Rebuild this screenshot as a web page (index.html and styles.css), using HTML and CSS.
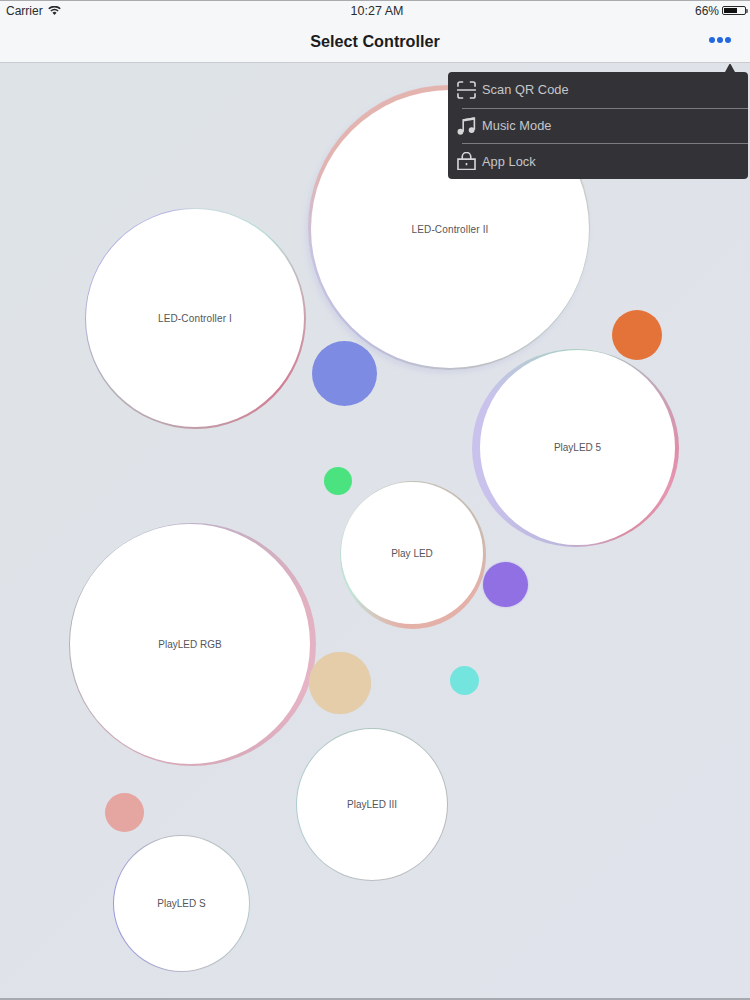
FILE: index.html
```html
<!DOCTYPE html>
<html lang="en">
<head>
<meta charset="utf-8">
<title>Select Controller</title>
<link rel="stylesheet" href="styles.css">
</head>
<body>
<div class="app">
  <header class="bars">
    <div class="status">
      <div class="status-left">
        <span>Carrier</span>
        <svg class="wifi" viewBox="0 0 14 10"><path d="M7 10 4.7 7.4a3.4 3.4 0 0 1 4.6 0zM3.6 6.2 2.4 4.9a7 7 0 0 1 9.200 0l-1.200 1.300a5.200 5.200 0 0 0-6.800 0zM1.300 3.700 0 2.400a10.400 10.400 0 0 1 14 0l-1.300 1.300a8.600 8.600 0 0 0-11.400 0z"/></svg>
      </div>
      <div class="status-time">10:27 AM</div>
      <div class="status-right">
        <span>66%</span>
        <span class="battery"><span class="battery-level"></span></span>
      </div>
    </div>
    <nav class="nav">
      <h1 class="nav-title">Select Controller</h1>
      <div class="nav-more"><i></i><i></i><i></i></div>
    </nav>
  </header>
  <main class="canvas">
    <div class="bubble ctrl-two"><span>LED-Controller II</span></div>
    <div class="bubble ctrl-one"><span>LED-Controller I</span></div>
    <div class="bubble play-five"><span>PlayLED 5</span></div>
    <div class="bubble play-led"><span>Play LED</span></div>
    <div class="bubble play-rgb"><span>PlayLED RGB</span></div>
    <div class="bubble play-three"><span>PlayLED III</span></div>
    <div class="bubble play-s"><span>PlayLED S</span></div>
    <div class="dot dot-blue"></div>
    <div class="dot dot-orange"></div>
    <div class="dot dot-green"></div>
    <div class="dot dot-purple"></div>
    <div class="dot dot-peach"></div>
    <div class="dot dot-cyan"></div>
    <div class="dot dot-salmon"></div>
    <div class="menu">
      <div class="menu-arrow"></div>
      <div class="menu-item">
        <svg class="menu-icon" viewBox="0 0 20 19"><path d="M1 6V3a2 2 0 0 1 2-2h3.500M13.500 1H17a2 2 0 0 1 2 2v3M1 13v3a2 2 0 0 0 2 2h3.500M13.500 18H17a2 2 0 0 0 2-2v-3M0 9.500h20"/></svg>
        <span>Scan QR Code</span>
      </div>
      <div class="menu-item">
        <svg class="menu-icon" viewBox="0 0 20 19"><path d="M6.500 15.500V3.200L18.300 1.200v12.300"/><path class="beam" d="M6.500 3.600 18.300 1.600"/><circle class="solid" cx="3.600" cy="15.600" r="3.100"/><circle class="solid" cx="15.400" cy="13.800" r="3.100"/></svg>
        <span>Music Mode</span>
      </div>
      <div class="menu-item">
        <svg class="menu-icon" viewBox="0 0 20 19"><path d="M5.500 7V5a4.500 4.500 0 0 1 9 0v2M1 7.500h18V18.500H1zM10 11.500v2.500"/></svg>
        <span>App Lock</span>
      </div>
    </div>
  </main>
</div>
</body>
</html>
```
FILE: styles.css
```css
* { box-sizing: border-box; }
html, body { margin: 0; padding: 0; }
body { width: 750px; height: 1000px; overflow: hidden; font-family: "Liberation Sans", Arial, sans-serif; }

.app { width: 750px; height: 1000px; display: flex; flex-direction: column; border-top: 1px solid #a9abae; border-bottom: 2px solid #a7a9b0; background: linear-gradient(135deg, #dee3e7, #e0e3eb); }

.bars { height: 62px; flex: none; background: #f5f7f8; border-bottom: 1px solid #c9cbce; display: flex; flex-direction: column; }
.status { height: 19px; padding: 0 4px 0 6px; display: grid; grid-template-columns: 1fr auto 1fr; align-items: center; font-size: 12px; color: #2b2b2d; }
.status-left { display: flex; align-items: center; gap: 5px; }
.wifi { width: 13px; height: 9px; fill: #2b2b2d; }
.status-time { font-size: 12.500px; padding-left: 2px; }
.status-right { display: flex; align-items: center; justify-content: flex-end; gap: 3px; }
.battery { width: 24px; height: 9px; padding: 1px; border: 1px solid #2b2b2d; border-radius: 2px; display: block; position: relative; }
.battery::after { content: ""; position: absolute; right: -3px; top: 1.500px; width: 2px; height: 4px; background: #6e6e70; border-radius: 0 1px 1px 0; }
.battery-level { display: block; width: 66%; height: 100%; background: #111; }

.nav { flex: 1; position: relative; display: flex; align-items: center; justify-content: center; padding-top: 1px; }
.nav-title { margin: 0; font-size: 16.200px; font-weight: 700; color: #1c1c1e; }
.nav-more { position: absolute; right: 19px; top: 17px; display: flex; gap: 2px; }
.nav-more i { display: block; width: 6px; height: 6px; border-radius: 50%; background: #2468e0; }

.canvas { flex: 1; margin-top: 1px; position: relative; overflow: hidden; z-index: 0; }

.bubble { position: absolute; border-radius: 50%; background: #fff; display: flex; align-items: center; justify-content: center; font-size: 10px; color: #55555a; }
.bubble::before { content: ""; position: absolute; z-index: -1; border-radius: 50%; inset: var(--halo); background: var(--ring); filter: blur(0.7px); opacity: 0.85; }
.ctrl-one, .ctrl-two { letter-spacing: 0.15px; }

.ctrl-one { left: 86px; top: 145px; width: 218px; height: 218px; --halo: -1.500px; --ring: conic-gradient(#c9d8dc 0deg, #b4dcd5 40deg, #c89aa5 85deg, #d26c86 130deg, #c08a98 170deg, #aeaab0 230deg, #a9a4e0 290deg, #a9a4e0 345deg, #c9d8dc 360deg); }
.ctrl-two { left: 311px; top: 26px; width: 278px; height: 278px; --halo: -5px -1px -2px -3px; --ring: conic-gradient(#e5aca5 0deg, #c9cac5 70deg, #b8c8c0 120deg, #b9bac0 170deg, #bab8de 220deg, #c4bee0 260deg, #e3aca8 295deg, #e5aca5 360deg); }
.ctrl-two::before { box-shadow: -2px 3px 6px rgba(175, 178, 220, 0.35); }
.play-five { left: 480px; top: 286px; width: 195px; height: 195px; --halo: -1.500px -4px -1.500px -8px; --ring: conic-gradient(#9fcdb8 0deg, #b3a7b5 40deg, #e0809f 90deg, #e88aa8 115deg, #d87c92 150deg, #b6b0dc 190deg, #c5bdee 240deg, #c5bdee 300deg, #9fcdb8 360deg); }
.play-led { left: 341px; top: 418px; width: 142px; height: 142px; --halo: -1px -3px -5px -1px; --ring: conic-gradient(#bdb9ae 0deg, #c8b4a6 70deg, #e5a99e 120deg, #e5a99e 190deg, #bde5d5 240deg, #b9d8c6 290deg, #c2bdb0 360deg); }
.play-rgb { left: 70px; top: 460px; width: 240px; height: 240px; --halo: -1.500px -6px -1.500px -1.500px; --ring: conic-gradient(#b9a8c5 0deg, #c9a5ba 30deg, #e2a9bb 70deg, #e8acbf 110deg, #dba2b4 150deg, #d4a0b0 200deg, #a9a9ae 270deg, #a9abc0 340deg, #b9a8c5 360deg); }
.play-three { left: 297px; top: 665px; width: 150px; height: 151px; --halo: -1px; --ring: conic-gradient(#a8c0b8 0deg, #b0b3b5 90deg, #b5b7b9 180deg, #a5c9cf 260deg, #a8c0b8 360deg); }
.play-s { left: 114px; top: 772px; width: 135px; height: 135px; --halo: -1px; --ring: conic-gradient(#b3b6b8 0deg, #a9c6c9 90deg, #b4b5bb 170deg, #8f8bdc 235deg, #8f8bdc 280deg, #b3b6b8 350deg); }

.dot { position: absolute; border-radius: 50%; filter: blur(0.6px); }
.dot-blue { left: 312px; top: 277px; width: 65px; height: 65px; background: #7d8be2; }
.dot-orange { left: 612px; top: 246px; width: 50px; height: 50px; background: #e4733a; }
.dot-green { left: 324px; top: 403px; width: 28px; height: 28px; background: #4be380; }
.dot-purple { left: 483px; top: 498px; width: 45px; height: 45px; background: #9170e4; box-shadow: 0 0 2px #b9a8f0; }
.dot-peach { left: 309px; top: 588px; width: 62px; height: 62px; background: #e5cdaa; box-shadow: 0 0 1px #d8cfc0; }
.dot-cyan { left: 450px; top: 602px; width: 29px; height: 29px; background: #74e4de; }
.dot-salmon { left: 105px; top: 729px; width: 39px; height: 39px; background: #e5a5a0; }

.menu { position: absolute; left: 448px; top: 8px; width: 300px; height: 107px; background: #333337; border-radius: 4px; display: flex; flex-direction: column; z-index: 2; }
.menu-arrow { position: absolute; right: 13px; top: -9px; width: 0; height: 0; border-left: 5px solid transparent; border-right: 5px solid transparent; border-bottom: 9px solid #333337; }
.menu-item { height: 36px; display: flex; align-items: center; gap: 6px; padding-left: 9px; font-size: 12.800px; letter-spacing: 0.05px; color: #c6c6ca; position: relative; }
.menu-item + .menu-item::before { content: ""; position: absolute; left: 14px; right: 0; top: 0; height: 1px; background: #7c7c80; }
.menu-icon { width: 19px; height: 18px; flex: none; fill: none; stroke: #d6d6d8; stroke-width: 1.700; }
.menu-icon .solid { fill: #d6d6d8; stroke: none; }
.menu-icon .beam { stroke-width: 2.500; }
```
